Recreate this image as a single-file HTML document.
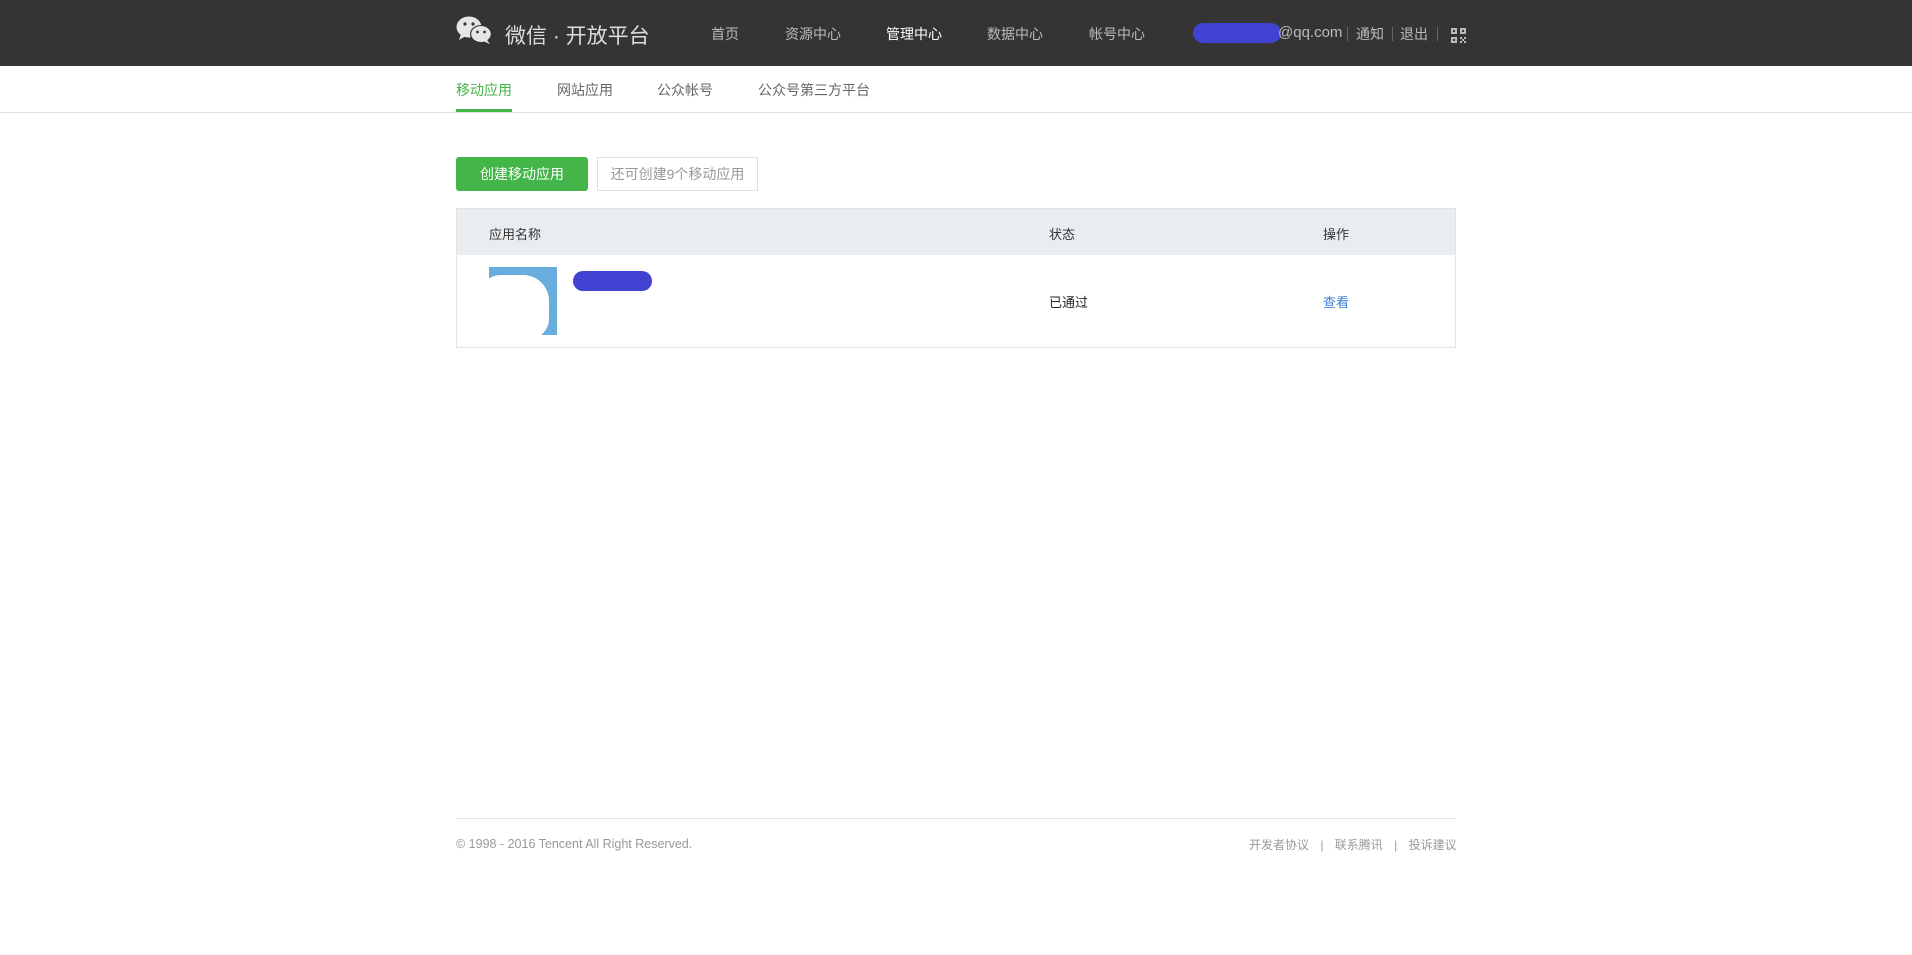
<!DOCTYPE html>
<html><head><meta charset="utf-8"><style>
*{margin:0;padding:0;box-sizing:border-box}
body{width:1912px;height:955px;background:#fff;font-family:"Liberation Sans","Noto Sans CJK SC",sans-serif;position:relative;overflow:hidden}
.a{position:absolute;white-space:nowrap}
#hd{position:absolute;left:0;top:0;width:1912px;height:66px;background:#343434}
.nav{color:#bbb;font-size:14px;top:24px}
.sub{font-size:14px;color:#666;top:80px}
.sep{position:absolute;width:1px;height:14px;background:#666;top:27px}
</style></head><body>
<div id="hd"></div>
<svg class="a" style="left:456px;top:16px" width="37" height="28" viewBox="0 0 37 28">
<ellipse cx="13" cy="11" rx="12.5" ry="10.5" fill="#e6e6e6"/><path d="M5 18 L3 24 L10 20Z" fill="#e6e6e6"/>
<ellipse cx="25" cy="18" rx="11" ry="9" fill="#343434"/>
<ellipse cx="25" cy="18" rx="9.8" ry="8" fill="#e6e6e6"/><path d="M31 24 L34 28 L27 25Z" fill="#e6e6e6"/>
<circle cx="9" cy="8" r="1.6" fill="#343434"/><circle cx="17" cy="8" r="1.6" fill="#343434"/>
<circle cx="21.5" cy="16" r="1.4" fill="#343434"/><circle cx="28.5" cy="16" r="1.4" fill="#343434"/></svg>
<div class="a" style="left:505px;top:20px;font-size:21px;color:#ddd">微信 · 开放平台</div>
<div class="a nav" style="left:711px">首页</div>
<div class="a nav" style="left:785px">资源中心</div>
<div class="a nav" style="left:886px;color:#fff">管理中心</div>
<div class="a nav" style="left:987px">数据中心</div>
<div class="a nav" style="left:1089px">帐号中心</div>
<div class="a" style="left:1193px;top:23px;width:88px;height:20px;border-radius:10px;background:#4242d2"></div>
<div class="a nav" style="left:1278px;font-size:15px;top:24px">@qq.com</div>
<div class="sep" style="left:1347px"></div>
<div class="a nav" style="left:1356px">通知</div>
<div class="sep" style="left:1392px"></div>
<div class="a nav" style="left:1400px">退出</div>
<div class="sep" style="left:1437px"></div>
<svg class="a" style="left:1451px;top:28px" width="15" height="15" viewBox="0 0 15 15" fill="#bbb">
<rect x="0" y="0" width="6" height="6"/><rect x="2" y="2" width="2" height="2" fill="#343434"/>
<rect x="9" y="0" width="6" height="6"/><rect x="11" y="2" width="2" height="2" fill="#343434"/>
<rect x="0" y="9" width="6" height="6"/><rect x="2" y="11" width="2" height="2" fill="#343434"/>
<rect x="9" y="9" width="2" height="2"/><rect x="13" y="9" width="2" height="2"/><rect x="11" y="11" width="2" height="2"/><rect x="9" y="13" width="2" height="2"/><rect x="13" y="13" width="2" height="2"/></svg>
<div class="a sub" style="left:456px;color:#44b549">移动应用</div>
<div class="a" style="left:456px;top:109px;width:56px;height:3px;background:#44b549"></div>
<div class="a" style="left:0;top:112px;width:1912px;height:1px;background:#e0e0e0"></div>
<div class="a sub" style="left:557px">网站应用</div>
<div class="a sub" style="left:657px">公众帐号</div>
<div class="a sub" style="left:758px">公众号第三方平台</div>
<div class="a" style="left:456px;top:157px;width:132px;height:34px;background:#44b549;border-radius:3px;color:#fff;font-size:14px;line-height:34px;text-align:center">创建移动应用</div>
<div class="a" style="left:597px;top:157px;width:161px;height:34px;border:1px solid #e0e0e0;color:#999;font-size:14px;line-height:32px;text-align:center">还可创建9个移动应用</div>
<div class="a" style="left:456px;top:208px;width:1000px;height:140px;border:1px solid #e2e2e2"></div>
<div class="a" style="left:457px;top:209px;width:998px;height:46px;background:#e9edf0"></div>
<div class="a" style="left:489px;top:224px;font-size:13px;color:#333">应用名称</div>
<div class="a" style="left:1049px;top:224px;font-size:13px;color:#333">状态</div>
<div class="a" style="left:1323px;top:224px;font-size:13px;color:#333">操作</div>
<div class="a" style="left:489px;top:267px;width:68px;height:68px;background:#69acde;overflow:hidden"><div style="position:absolute;left:-10px;top:8px;width:70px;height:64px;background:#fff;border-radius:22px 26px 20px 10px"></div></div>
<div class="a" style="left:573px;top:271px;width:79px;height:20px;border-radius:10px;background:#4242d2"></div>
<div class="a" style="left:1049px;top:292px;font-size:13px;color:#222">已通过</div>
<div class="a" style="left:1323px;top:292px;font-size:13px;color:#3d82d8">查看</div>
<div class="a" style="left:456px;top:818px;width:1000px;height:1px;background:#e3e3e3"></div>
<div class="a" style="left:456px;top:837px;font-size:12.5px;color:#999">© 1998 - 2016 Tencent All Right Reserved.</div>
<div class="a" style="left:1249px;top:836px;font-size:12px;color:#999">开发者协议 <span style="margin:0 8px">|</span> 联系腾讯 <span style="margin:0 8px">|</span> 投诉建议</div>
</body></html>
